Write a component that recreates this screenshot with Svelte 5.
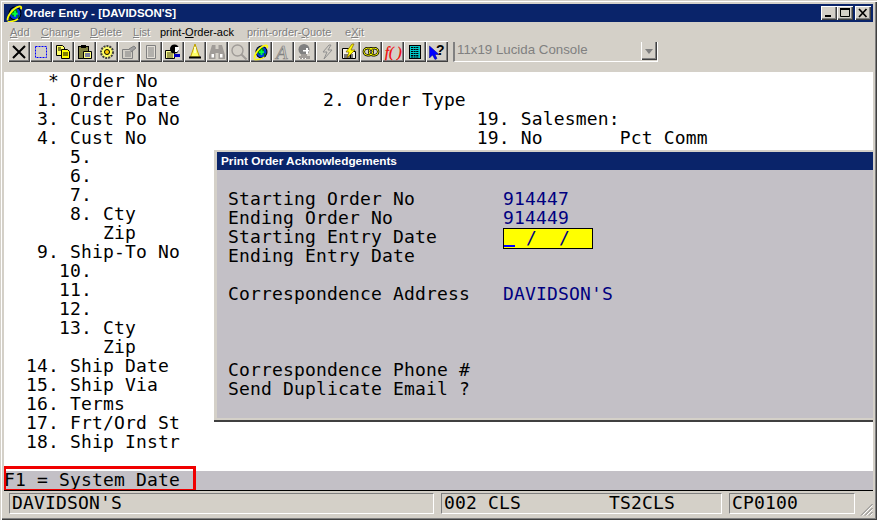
<script lang="ts">
  const leftRows = `    * Order No
   1. Order Date             2. Order Type
   3. Cust Po No                           19. Salesmen:
   4. Cust No                              19. No       Pct Comm
      5.
      6.
      7.
      8. Cty
         Zip
   9. Ship-To No
     10.
     11.
     12.
     13. Cty
         Zip
  14. Ship Date
  15. Ship Via
  16. Terms
  17. Frt/Ord St
  18. Ship Instr`;

  const labels = `Starting Order No
Ending Order No
Starting Entry Date
Ending Entry Date

Correspondence Address



Correspondence Phone #
Send Duplicate Email ?`;

  const values = `914447
914449



DAVIDSON'S`;
</script>

{#snippet globe()}
  <ellipse cx="8.500" cy="8" rx="6" ry="6.500" fill="#000" />
  <ellipse cx="8.500" cy="8" rx="5" ry="5.500" fill="#0038e0" />
  <path d="M6 4h4l1 3-3 1-1 3-3-3zM11 9l2 1-2 3z" fill="#008000" />
  <path d="M8.500 5.500v5.500M6 8.200h5" stroke="#00ff40" stroke-width="1.800" />
  <path d="M1.500 14.500C1 11 6 3 12 1.500c2-.5 3 .5 2 2.500" fill="none" stroke="#ffff00" stroke-width="1.700" />
  <path d="M1.500 15.500c3 .5 7-.5 10-2.500" fill="none" stroke="#ffff00" stroke-width="1.300" />
{/snippet}

<div class="window">
  <header class="title">
    <svg class="logo" viewBox="0 0 16 16">{@render globe()}</svg>
    <span class="title-text">Order Entry - [DAVIDSON'S]</span>
    <div class="caption">
      <button class="cap"><svg viewBox="0 0 14 12"><rect x="3" y="8" width="6" height="2" fill="#000" /></svg></button>
      <button class="cap"><svg viewBox="0 0 14 12"><path d="M2.500 2.500h9v7h-9z" fill="none" stroke="#000" /><rect x="2" y="1" width="10" height="2" fill="#000" /></svg></button>
      <button class="cap close"><svg viewBox="0 0 14 12"><path d="M3 2l7.500 8M10.500 2L3 10" stroke="#000" stroke-width="1.700" /></svg></button>
    </div>
  </header>

  <nav class="menu">
    <span class="off m1"><u>A</u>dd</span>
    <span class="off m2"><u>C</u>hange</span>
    <span class="off m3"><u>D</u>elete</span>
    <span class="off m4"><u>L</u>ist</span>
    <span class="m5">print-<u>O</u>rder-ack</span>
    <span class="off m6">print-order-<u>Q</u>uote</span>
    <span class="off m7">e<u>X</u>it</span>
  </nav>

  <div class="toolbar">
    <div class="tools">
      <button class="tb"><svg viewBox="0 0 16 16"><path d="M2 2l12 12M14 2L2 14" stroke="#000" stroke-width="2" /></svg></button>
      <button class="tb"><svg viewBox="0 0 16 16"><rect x="2.500" y="2.500" width="11" height="11" fill="none" stroke="#0000ff" stroke-dasharray="2 1" /></svg></button>
      <button class="tb"><svg viewBox="0 0 16 16"><path d="M1.500 1.500h6l2 2v8h-8z" fill="#ffff66" stroke="#000" /><path d="M6.500 5.500h6l2 2v7h-8z" fill="#ffff00" stroke="#000" /><path d="M8 9h5M8 11h5M3 4h3M3 6h3" stroke="#000" /></svg></button>
      <button class="tb"><svg viewBox="0 0 16 16"><rect x="1.500" y="2.500" width="10" height="12" fill="#808040" stroke="#000" /><rect x="4" y="1" width="5" height="3" fill="#000" /><path d="M6.500 7.500h8v7h-8z" fill="#ffff80" stroke="#000" /><path d="M8 10h5M8 12h5" stroke="#0000c0" /></svg></button>
      <button class="tb"><svg viewBox="0 0 16 16"><circle cx="8" cy="8" r="6" fill="#ffff66" stroke="#404040" stroke-dasharray="2 1" stroke-width="2" /><circle cx="8" cy="8" r="2.500" fill="#ffcc00" stroke="#000" /></svg></button>
      <button class="tb"><svg viewBox="0 0 16 16"><path d="M1.500 5.500h10v9h-10z" fill="#d4d0c8" stroke="#808080" /><path d="M4 8h6M4 10h6M4 12h6" stroke="#808080" /><path d="M8 5l5-3 2 2-5 4" fill="#a0a0a0" stroke="#808080" /></svg></button>
      <button class="tb"><svg viewBox="0 0 16 16"><path d="M3.500 1.500h9v13h-9z" fill="#e4e0d8" stroke="#808080" /><path d="M5 4h6M5 6h6M5 8h6M5 10h6M5 12h6" stroke="#808080" /></svg></button>
      <button class="tb"><svg viewBox="0 0 16 16"><path d="M0.500 6.500h9v8h-9z" fill="#ffff99" stroke="#000" /><path d="M2 9h6M2 11h6M2 13h6" stroke="#404000" /><circle cx="9.500" cy="5" r="4.500" fill="#000" /><path d="M10 3h4v3l-2 2h-2z" fill="#fff" /><path d="M9 10h6v3H9z" fill="#0000c0" /></svg></button>
      <button class="tb"><svg viewBox="0 0 16 16"><path d="M8 0l4.500 13h-9z" fill="#ffff66" stroke="#c0a000" /><path d="M2 13.500h12" stroke="#000" stroke-width="2" /><rect x="7" y="3" width="2" height="6" fill="#ffffc0" /></svg></button>
      <button class="tb"><svg viewBox="0 0 16 16"><path d="M3 1h3.500v4h3V1H13l3 10v4H9.500V9h-3v6H0v-4z" fill="#a09c98" /><rect x="2.500" y="10" width="2.500" height="3.500" fill="#fff" /><rect x="11" y="10" width="2.500" height="3.500" fill="#fff" /></svg></button>
      <button class="tb"><svg viewBox="0 0 16 16"><circle cx="6.500" cy="6.500" r="5.500" fill="none" stroke="#a09c98" stroke-width="1.400" /><path d="M10.500 10.500l5 5" stroke="#a09c98" stroke-width="2" /></svg></button>
      <button class="tb"><svg viewBox="0 0 16 16">{@render globe()}</svg></button>
      <button class="tb"><svg viewBox="0 0 16 16"><text x="1" y="15" class="glyph-a">A</text></svg></button>
      <button class="tb"><svg viewBox="0 0 16 16"><circle cx="7" cy="5.500" r="5.500" fill="#808080" /><path d="M4 10h6v2h3v3H2v-3h2z" fill="#a09c98" /><path d="M9 4h2v6H9zM6 6h6v1.500H6z" fill="#fff" /><path d="M2 14h1v1H2zM5 14h1v1H5zM8 14h1v1H8z" fill="#fff" /></svg></button>
      <button class="tb"><svg viewBox="0 0 16 16"><path d="M10 1L4 8h4l-3 7 8-9H9l3-5z" fill="#d4d0c8" stroke="#909090" /></svg></button>
      <button class="tb sel"><svg viewBox="0 0 16 16"><path d="M1.500 4.500h8v10h-8zM9.500 7.500h5v7h-5z" fill="#f4f0e8" stroke="#000" /><path d="M3 11h9M3 13h9" stroke="#000" /><path d="M11 0L5 8h3l-2 6 8-8h-4l3-6z" fill="#ffff00" stroke="#806000" stroke-width=".7" /></svg></button>
      <button class="tb"><svg viewBox="0 0 16 16"><rect x="0.800" y="4.200" width="9" height="7" rx="3.500" fill="none" stroke="#000" stroke-width="2.400" /><rect x="6.200" y="4.200" width="9" height="7" rx="3.500" fill="none" stroke="#000" stroke-width="2.400" /><rect x="0.800" y="4.200" width="9" height="7" rx="3.500" fill="none" stroke="#ffff00" /><rect x="6.200" y="4.200" width="9" height="7" rx="3.500" fill="none" stroke="#ffff00" /></svg></button>
      <button class="tb"><svg viewBox="0 0 16 16"><text x="0" y="13" class="glyph-f">f( )</text></svg></button>
      <button class="tb"><svg viewBox="0 0 16 16"><rect x="2.500" y="1.500" width="11" height="13" fill="#00c8c8" stroke="#000" /><path d="M4 3.500h8M4 5.500h8M4 7.500h8M4 9.500h8M4 11.500h8M4 13h8" stroke="#000" stroke-dasharray="2 .6" /></svg></button>
      <button class="tb"><svg viewBox="0 0 16 16"><path d="M0.500 2v12l3-3 2.500 4.500 2-1-2-4h4z" fill="#0000ff" stroke="#000080" stroke-width=".5" /><text x="7" y="11" class="glyph-q">?</text></svg></button>
    </div>
    <div class="combo">
      <span class="combo-text">11x19 Lucida Console</span>
      <button class="drop" aria-label="Open"><span class="arrow"></span></button>
    </div>
  </div>

  <main class="terminal">
    <pre class="screen">{leftRows}</pre>
    <div class="prompt"><pre>F1 = System Date</pre></div>

    <section class="dialog">
      <div class="dlg-title">Print Order Acknowledgements</div>
      <div class="dlg-body">
        <pre class="labels">{labels}</pre>
        <pre class="values">{values}</pre>
        <div class="field"><span class="cursor"></span> / &nbsp;/</div>
      </div>
    </section>

    <div class="highlight"></div>
  </main>

  <footer class="status">
    <pre class="panel wide">DAVIDSON'S</pre>
    <pre class="panel mid">002 CLS        TS2CLS</pre>
    <pre class="panel small">CP0100</pre>
    <svg class="grip" viewBox="0 0 13 13"><path d="M12.500 1L1 12.500M12.500 5L5 12.500M12.500 9L9 12.500" stroke="#808080" /><path d="M12.500 2.500L2.500 12.500M12.500 6.500L6.500 12.500M12.500 10.500L10.500 12.500" stroke="#fff" /></svg>
  </footer>
</div>

<style>
  :global(body) {
    background: #d4d0c8;
  }

  .window {
    box-sizing: border-box;
    width: 877px;
    height: 520px;
    padding: 4px;
    display: flex;
    flex-direction: column;
    overflow: hidden;
    background: #d4d0c8;
    box-shadow: inset 1px 1px 0 #d4d0c8, inset 2px 2px 0 #fff, inset -1px -1px 0 #404040, inset -2px -2px 0 #808080;
    font-family: "Liberation Sans", Arial, sans-serif;
  }

  pre {
    margin: 0;
    font: 18px/19px "DejaVu Sans Mono", monospace;
    letter-spacing: 0.16px;
    color: #000;
  }

  .title {
    flex: none;
    height: 18px;
    display: flex;
    align-items: center;
    background: #0a246a;
    color: #fff;
    padding: 0 2px;
  }

  .logo {
    width: 17px;
    height: 17px;
    flex: none;
  }

  .title-text {
    margin-left: 1px;
    font: bold 11.500px "Liberation Sans", sans-serif;
    white-space: nowrap;
  }

  .caption {
    margin-left: auto;
    display: flex;
  }

  button {
    padding: 0;
    margin: 0;
    border: 0;
    background: #d4d0c8;
    display: flex;
    align-items: center;
    justify-content: center;
  }

  .cap {
    width: 16px;
    height: 14px;
    box-shadow: inset 1px 1px 0 #fff, inset -1px -1px 0 #404040, inset -2px -2px 0 #808080;
  }

  .cap svg {
    width: 14px;
    height: 12px;
  }

  .close {
    margin-left: 2px;
  }

  .menu {
    flex: none;
    height: 19px;
    position: relative;
    font-size: 11px;
    line-height: 20px;
    white-space: nowrap;
    color: #000;
  }

  .menu span {
    position: absolute;
    top: 0;
  }

  .off {
    color: #808080;
    text-shadow: 1px 1px 0 #fff;
  }

  .m1 { left: 6px; }
  .m2 { left: 37px; }
  .m3 { left: 86px; }
  .m4 { left: 129px; }
  .m5 { left: 156px; }
  .m6 { left: 243px; }
  .m7 { left: 341px; }

  .toolbar {
    flex: none;
    height: 31px;
    display: flex;
    align-items: flex-start;
    padding-left: 4px;
  }

  .tools {
    display: flex;
  }

  .tb {
    width: 22px;
    height: 21px;
    box-shadow: inset 1px 1px 0 #fff, inset -1px -1px 0 #404040, inset -2px -2px 0 #808080;
  }

  .tb.sel {
    background: #c8c4bc;
  }

  .tb svg {
    width: 16px;
    height: 16px;
    display: block;
    overflow: visible;
  }

  .glyph-a {
    font: italic 19px "Liberation Serif", serif;
    fill: none;
    stroke: #808080;
    stroke-width: 0.7px;
  }

  .glyph-f {
    font: italic 14px "Liberation Serif", serif;
    fill: #f00000;
    stroke: #f00000;
    stroke-width: 0.3px;
  }

  .glyph-q {
    font: bold 14px "Liberation Sans", sans-serif;
    fill: #000;
  }

  .combo {
    box-sizing: border-box;
    width: 205px;
    height: 20px;
    margin: 1px 0 0 5px;
    padding-left: 2px;
    display: flex;
    align-items: flex-start;
    justify-content: space-between;
    border-left: 2px solid #808080;
    border-bottom: 1px solid #fff;
    border-right: 1px solid #fff;
  }

  .combo-text {
    font-size: 13.300px;
    line-height: 15px;
    color: #808080;
    white-space: nowrap;
  }

  .drop {
    width: 16px;
    height: 18px;
    box-shadow: inset 1px 0 0 #fff, inset -1px -1px 0 #404040, inset -2px -2px 0 #808080;
  }

  .arrow {
    width: 0;
    height: 0;
    border: 4px solid transparent;
    border-top: 5px solid #808080;
    border-bottom: 0;
  }

  .terminal {
    flex: none;
    height: 418px;
    position: relative;
    overflow: hidden;
    background: #fff;
    display: flex;
    flex-direction: column;
  }

  .screen {
    flex: none;
    height: 400px;
    margin-top: -1px;
  }

  .prompt {
    flex: none;
    height: 19px;
    background: #c3c0c6;
  }

  .prompt pre {
    margin-top: -1px;
  }

  .dialog {
    position: absolute;
    left: 210px;
    top: 78px;
    width: 680px;
    height: 270px;
    box-sizing: border-box;
    border: 3px solid #d4d0c8;
    border-top-width: 2px;
    border-bottom-width: 2px;
    background: #c3c0c6;
    box-shadow: 0 2px 0 #404040;
  }

  .dlg-title {
    height: 18px;
    padding-left: 4px;
    background: #0a246a;
    color: #fff;
    font: bold 11.800px/18px "Liberation Sans", sans-serif;
  }

  .dlg-body {
    position: relative;
    display: flex;
    padding: 19px 0 0 11px;
  }

  .labels {
    width: 275px;
    flex: none;
  }

  .values {
    color: #000080;
  }

  .field {
    position: absolute;
    left: 286px;
    top: 58px;
    box-sizing: border-box;
    width: 90px;
    height: 21px;
    background: #ffff00;
    border: 1px solid #000;
    font: 18px/17px "DejaVu Sans Mono", monospace;
    letter-spacing: 0.16px;
    color: #000080;
    white-space: pre;
  }

  .cursor {
    display: inline-block;
    width: 11px;
    height: 2px;
    background: #0000ff;
    vertical-align: -3px;
  }

  .highlight {
    position: absolute;
    left: -1px;
    top: 394px;
    width: 193px;
    height: 26px;
    box-sizing: border-box;
    border: 3px solid #f00000;
  }

  .status {
    flex: 1;
    position: relative;
    display: flex;
    gap: 7px;
    padding: 2px 0 0 5px;
    border-top: 1px solid #000;
  }

  .panel {
    box-sizing: border-box;
    height: 21px;
    padding-left: 2px;
    line-height: 18px;
    border: 1px solid;
    border-color: #808080 #fff #fff #808080;
  }

  .wide { width: 425px; }
  .mid { width: 281px; }
  .small { width: 126px; }

  .grip {
    position: absolute;
    right: 0;
    bottom: 0;
    width: 13px;
    height: 13px;
  }
</style>
